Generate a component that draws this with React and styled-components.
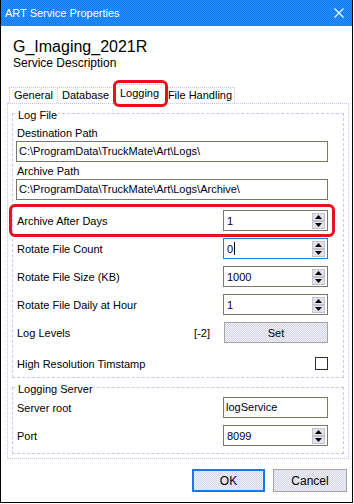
import React from "react";
import styled, { createGlobalStyle, css } from "styled-components";

const Global = createGlobalStyle`
  html, body { margin: 0; padding: 0; background: #fff; }
  body {
    font-family: "Liberation Sans", Arial, sans-serif;
    font-size: 11px;
    color: #000;
  }
  * { box-sizing: border-box; }
`;

const dither = (a, b) => css`
  background: repeating-conic-gradient(${a} 0% 25%, ${b} 0% 50%) 0 0 / 2px 2px;
`;

const Window = styled.div`
  width: 353px;
  border: 1px solid #000;
  border-top: none;
  display: flex;
  flex-direction: column;
  padding-bottom: 10px;
  background: #fff;
`;

const TitleBar = styled.div`
  height: 26px;
  display: flex;
  align-items: center;
  justify-content: space-between;
  padding: 0 8px 0 4px;
  ${dither("#0c7bf0", "#2a8ff9")}
  color: #fff;
  font-size: 11px;
  line-height: 26px;
`;

const Header = styled.div`
  padding: 12px 12px 0;
`;

const AppName = styled.div`
  font-size: 16px;
  line-height: 18px;
`;

const Subtitle = styled.div`
  font-size: 12px;
  line-height: 15px;
`;

const TabStrip = styled.div`
  display: flex;
  align-items: flex-end;
  height: 20px;
  margin: 13px 0 0 9px;
`;

const Tab = styled.div`
  position: relative;
  width: ${(p) => p.$w}px;
  height: ${(p) => (p.$active ? 20 : 16)}px;
  margin-bottom: ${(p) => (p.$active ? 0 : 1)}px;
  margin-left: -1px;
  border: 1px dotted #c4c4ec;
  border-bottom: none;
  background: #fff;
  text-align: center;
  line-height: 15px;
  padding-top: ${(p) => (p.$active ? 1 : 0)}px;
  z-index: ${(p) => (p.$active ? 2 : 1)};
  white-space: nowrap;
  ${(p) =>
    p.$highlight &&
    css`
      &::after {
        content: "";
        position: absolute;
        left: -1px;
        top: -5px;
        right: -3px;
        bottom: -3px;
        border: 3px solid #e8121a;
        border-radius: 6px;
      }
    `}
`;

const Panel = styled.div`
  position: relative;
  margin: -1px 3px 0 6px;
  border: 1px dotted #c4c4ec;
  padding: 9px 4px 4px;
  display: flex;
  flex-direction: column;
`;

const Group = styled.div`
  position: relative;
  border: 1px dashed #c8c8ec;
  padding: ${(p) => p.$pad};
  margin-top: ${(p) => p.$mt || 0}px;
  display: flex;
  flex-direction: column;
`;

const Legend = styled.span`
  position: absolute;
  top: -5px;
  left: 4px;
  background: #fff;
  padding: 0 1px;
  line-height: 13px;
`;

const FieldLabel = styled.div`
  line-height: 14px;
  padding-left: 1px;
  margin-top: ${(p) => p.$mt || 0}px;
  margin-bottom: 1px;
`;

const TextBox = styled.div`
  height: 21px;
  width: ${(p) => (p.$w ? `${p.$w}px` : "auto")};
  border: 1px solid #77776a;
  padding: 0 2px;
  line-height: 19px;
  color: #000022;
  white-space: nowrap;
  overflow: hidden;
`;

const Row = styled.div`
  position: relative;
  display: flex;
  align-items: center;
  justify-content: space-between;
  height: 21px;
  margin-top: ${(p) => p.$mt || 0}px;
  ${(p) =>
    p.$highlight &&
    css`
      &::after {
        content: "";
        position: absolute;
        left: -7px;
        top: -6px;
        right: -7px;
        bottom: -6px;
        border: 3px solid #e8121a;
        border-radius: 6px;
        pointer-events: none;
      }
    `}
`;

const RowLabel = styled.span`
  padding-left: 1px;
  line-height: 14px;
`;

const Spin = styled.div`
  width: 105px;
  height: 21px;
  border: 1px solid ${(p) => (p.$focus ? "#1a7ae8" : "#77776a")};
  display: flex;
  align-items: center;
  padding-left: 3px;
  padding-right: 2px;
  color: #000022;
`;

const SpinValue = styled.span`
  flex: 1;
  display: flex;
  align-items: center;
  line-height: 14px;
`;

const Caret = styled.span`
  display: inline-block;
  width: 1px;
  height: 13px;
  background: #000;
  margin-left: 1px;
`;

const SpinButtons = styled.div`
  display: flex;
  flex-direction: column;
`;

const SpinBtn = styled.div`
  width: 13px;
  height: 8px;
  border: 1px solid #c2c2cc;
  background: #e2e2ea;
  display: flex;
  align-items: center;
  justify-content: center;
`;

const RightGroup = styled.div`
  display: flex;
  align-items: center;
`;

const Levels = styled.span`
  margin-right: 14px;
`;

const PushButton = styled.div`
  width: ${(p) => p.$w}px;
  height: ${(p) => p.$h || 21}px;
  ${dither("#d2d2ea", "#f4f4f6")}
  border: ${(p) => (p.$default ? "2px solid #1878e6" : "1px solid #a6a6a0")};
  display: flex;
  align-items: center;
  justify-content: center;
  font-size: ${(p) => p.$fs || 11}px;
`;

const CheckBox = styled.div`
  width: 13px;
  height: 13px;
  border: 1px solid #2e2e22;
  background: #fff;
`;

const ButtonBar = styled.div`
  display: flex;
  justify-content: flex-end;
  gap: 8px;
  margin: 10px 5px 0 0;
`;

const Arrow = ({ up }) => (
  <svg width="7" height="4" viewBox="0 0 7 4">
    <polygon points={up ? "3.5,0 7,4 0,4" : "0,0 7,0 3.5,4"} fill="#000" />
  </svg>
);

const Spinner = ({ value, focus }) => (
  <Spin $focus={focus}>
    <SpinValue>
      {value}
      {focus && <Caret />}
    </SpinValue>
    <SpinButtons>
      <SpinBtn>
        <Arrow up />
      </SpinBtn>
      <SpinBtn>
        <Arrow />
      </SpinBtn>
    </SpinButtons>
  </Spin>
);

const CloseIcon = () => (
  <svg width="10" height="10" viewBox="0 0 10 10">
    <path d="M0.5 0.5 L9.5 9.5 M9.5 0.5 L0.5 9.5" stroke="#fff" strokeWidth="1.1" />
  </svg>
);

export default function App() {
  return (
    <>
      <Global />
      <Window>
        <TitleBar>
          <span>ART Service Properties</span>
          <CloseIcon />
        </TitleBar>
        <Header>
          <AppName>G_Imaging_2021R</AppName>
          <Subtitle>Service Description</Subtitle>
        </Header>
        <TabStrip>
          <Tab $w={49}>General</Tab>
          <Tab $w={57}>Database</Tab>
          <Tab $w={53} $active $highlight>
            Logging
          </Tab>
          <Tab $w={70}>File Handling</Tab>
        </TabStrip>
        <Panel>
          <Group $pad="12px 15px 3px 3px">
            <Legend>Log File</Legend>
            <FieldLabel>Destination Path</FieldLabel>
            <TextBox>C:\ProgramData\TruckMate\Art\Logs\</TextBox>
            <FieldLabel $mt={2}>Archive Path</FieldLabel>
            <TextBox>C:\ProgramData\TruckMate\Art\Logs\Archive\</TextBox>
            <Row $mt={10} $highlight>
              <RowLabel>Archive After Days</RowLabel>
              <Spinner value="1" />
            </Row>
            <Row $mt={7}>
              <RowLabel>Rotate File Count</RowLabel>
              <Spinner value="0" focus />
            </Row>
            <Row $mt={7}>
              <RowLabel>Rotate File Size (KB)</RowLabel>
              <Spinner value="1000" />
            </Row>
            <Row $mt={7}>
              <RowLabel>Rotate File Daily at Hour</RowLabel>
              <Spinner value="1" />
            </Row>
            <Row $mt={7}>
              <RowLabel>Log Levels</RowLabel>
              <RightGroup>
                <Levels>[-2]</Levels>
                <PushButton $w={104}>Set</PushButton>
              </RightGroup>
            </Row>
            <Row $mt={10}>
              <RowLabel>High Resolution Timstamp</RowLabel>
              <CheckBox />
            </Row>
          </Group>
          <Group $pad="9px 15px 7px 3px" $mt={9}>
            <Legend>Logging Server</Legend>
            <Row>
              <RowLabel>Server root</RowLabel>
              <TextBox $w={105}>logService</TextBox>
            </Row>
            <Row $mt={7}>
              <RowLabel>Port</RowLabel>
              <Spinner value="8099" />
            </Row>
          </Group>
        </Panel>
        <ButtonBar>
          <PushButton $w={73} $h={23} $default $fs={12}>
            OK
          </PushButton>
          <PushButton $w={74} $h={23} $fs={12}>
            Cancel
          </PushButton>
        </ButtonBar>
      </Window>
    </>
  );
}
